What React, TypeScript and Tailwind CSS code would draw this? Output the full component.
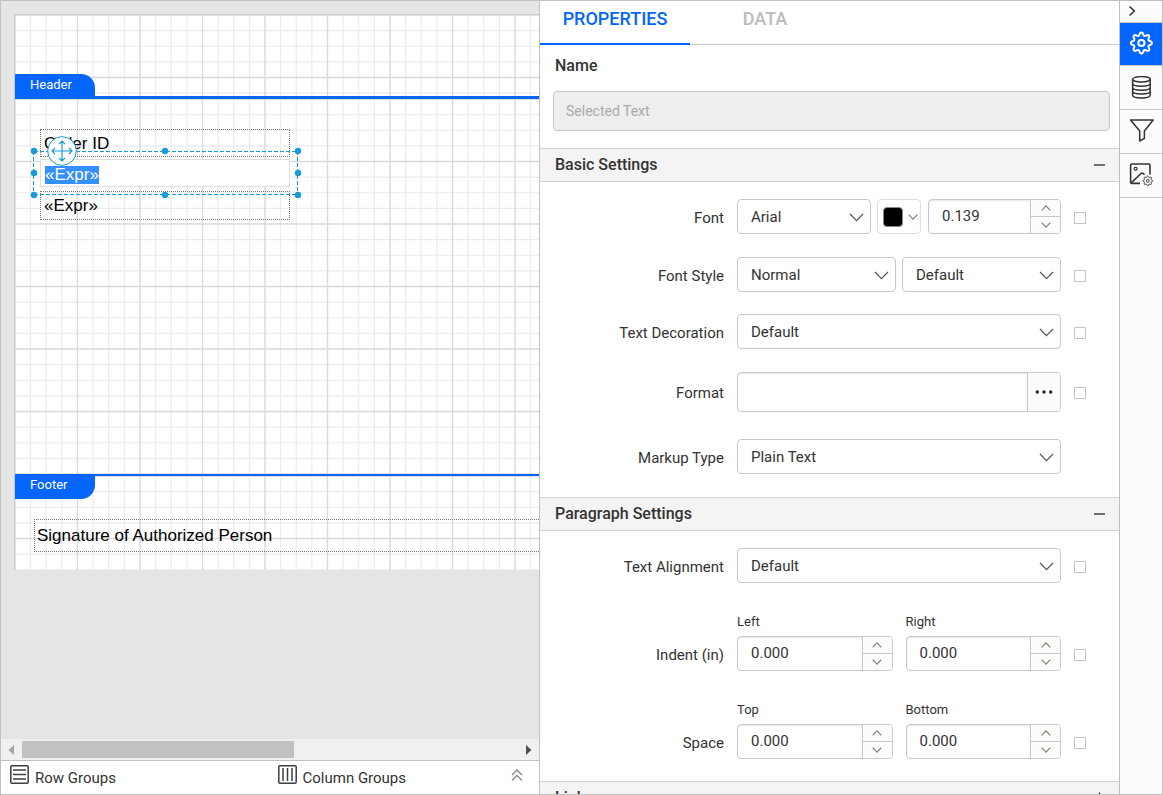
import { useId, type ReactNode } from "react";

function GridPaper() {
  const id = useId();
  const minor = [15.625, 31.25, 46.875, 78.125, 93.75, 109.375];
  const major = [0, 62.5, 125];
  const lines = (at: number[]) => at.map((p) => `M${p} 0V125M0 ${p}H125`).join("");
  return (
    <svg className="absolute inset-0 h-full w-full" aria-hidden="true">
      <defs>
        <pattern id={id} width="125" height="125" patternUnits="userSpaceOnUse">
          <path d={lines(minor)} stroke="#ececec" strokeWidth="1.2" />
          <path d={lines(major)} stroke="#d9d9d9" strokeWidth="1.4" />
        </pattern>
      </defs>
      <rect width="100%" height="100%" fill={`url(#${id})`} />
    </svg>
  );
}

/** Closed outline of an eight-lobed gear around (cx, cy). */
function gearPath(cx: number, cy: number, radius: number, lobe: number) {
  const points: string[] = [];
  for (let i = 0; i < 96; i++) {
    const a = (i * Math.PI) / 48;
    const wave = Math.cos(8 * a);
    const r = radius + lobe * Math.sign(wave) * Math.pow(Math.abs(wave), 0.7);
    points.push(`${(cx + r * Math.cos(a)).toFixed(2)} ${(cy + r * Math.sin(a)).toFixed(2)}`);
  }
  return `M${points.join("L")}Z`;
}

function GearIcon() {
  return (
    <svg width="26" height="26" viewBox="0 0 26 26" fill="none" stroke="#fff" strokeWidth="2" strokeLinejoin="round" aria-hidden="true">
      <path d={gearPath(13.4, 12, 9.1, 1.4)} />
      <circle cx="13.4" cy="12" r="3.1" />
    </svg>
  );
}

function DatabaseIcon() {
  return (
    <svg width="22" height="24" viewBox="0 0 22 24" fill="none" stroke="#333" strokeWidth="1.5" aria-hidden="true">
      <ellipse cx="11.4" cy="3.3" rx="8.8" ry="2.7" />
      <path d="M2.6 3.300V19C2.600 20.800 6 22 11.400 22S20.200 20.800 20.200 19V3.300M2.600 7.300C2.600 9.100 6 10.300 11.400 10.300S20.200 9.100 20.200 7.300M2.600 11.200C2.600 13 6 14.200 11.400 14.200S20.200 13 20.200 11.200M2.600 15.100C2.600 16.900 6 18.100 11.400 18.100S20.200 16.900 20.200 15.100" />
    </svg>
  );
}

function FunnelIcon() {
  return (
    <svg width="26" height="26" viewBox="0 0 26 26" fill="none" stroke="#333" strokeWidth="1.5" strokeLinejoin="round" aria-hidden="true">
      <path d="M2.6 1H25.2L16.4 12V19.400L11.700 22V12Z" />
    </svg>
  );
}

function ImageSettingsIcon() {
  return (
    <svg width="26" height="26" viewBox="0 0 26 26" fill="none" stroke="#333" aria-hidden="true">
      <path strokeWidth="1.600" d="M22 11.500V2.200A1.200 1.200 0 0 0 20.800 1H3.800A1.200 1.200 0 0 0 2.600 2.200V19.200A1.200 1.200 0 0 0 3.800 20.400H12" />
      <path strokeWidth="1.600" d="M3.500 19.600L13 10.500Q14 9.700 15 10.500L16.500 11.700" />
      <circle cx="7.600" cy="5.800" r="1.500" strokeWidth="1.200" />
      <path strokeWidth="1" d={gearPath(19.8, 17.8, 4.2, 0.7)} />
      <circle cx="19.800" cy="17.800" r="1.400" strokeWidth="1" />
    </svg>
  );
}

function Chevron({ up = false, small = false }: { up?: boolean; small?: boolean }) {
  return (
    <svg
      className={small ? "h-[6px] w-[10px]" : "h-[9px] w-[15px]"}
      viewBox="0 0 15 9"
      fill="none"
      stroke={small ? "#8f7b70" : "#555"}
      strokeWidth={small ? 1.8 : 1.2}
      aria-hidden="true"
    >
      <path d={up ? "M1 8L7.5 1.3L14 8" : "M1 1L7.5 7.7L14 1"} />
    </svg>
  );
}

function Select({ id, label, value, className = "flex-1" }: { id: string; label?: string; value: string; className?: string }) {
  return (
    <div className={`relative min-w-0 ${className}`}>
      <select
        id={id}
        aria-label={label}
        className="h-[35px] w-full appearance-none rounded border border-[#c8c8c8] bg-white pl-[13px] pr-6 pt-px text-[15px] text-[#333]"
      >
        <option>{value}</option>
      </select>
      <span className="pointer-events-none absolute inset-y-0 right-[7px] flex items-center pt-px">
        <Chevron />
      </span>
    </div>
  );
}

function Spinner({ id, value, label, className = "flex-1" }: { id: string; value: string; label?: string; className?: string }) {
  return (
    <div className={`flex h-[35px] min-w-0 overflow-hidden rounded border border-[#c8c8c8] bg-white ${className}`}>
      <input
        id={id}
        aria-label={label}
        defaultValue={value}
        className="min-w-0 flex-1 pl-[13px] text-[15px] text-[#333] shadow-[inset_0_1px_2px_#0000001a]"
      />
      <div className="flex w-[30px] shrink-0 flex-col divide-y divide-[#c8c8c8] border-l border-[#c8c8c8] bg-[#fcfcfc]">
        <button type="button" aria-label="Increase" className="flex flex-1 items-center justify-center">
          <Chevron up small />
        </button>
        <button type="button" aria-label="Decrease" className="flex flex-1 items-center justify-center">
          <Chevron small />
        </button>
      </div>
    </div>
  );
}

function Row({ label, htmlFor, className = "items-end mb-[23px]", check = true, children }: {
  label: string;
  htmlFor: string;
  className?: string;
  check?: boolean;
  children: ReactNode;
}) {
  return (
    <div className={`flex pr-[33px] ${className}`}>
      <div className="flex h-[35px] w-[184px] shrink-0 items-center justify-end pt-[3px]">
        <label htmlFor={htmlFor}>{label}</label>
      </div>
      <div className="ml-[13px] flex min-w-0 flex-1">{children}</div>
      <div className="ml-[13px] flex h-[35px] w-3 shrink-0 items-center pt-0.5">
        {check && (
          <input type="checkbox" aria-label={`${label} expression`} className="h-3 w-3 appearance-none border border-[#c4c4c4] bg-white" />
        )}
      </div>
    </div>
  );
}

function SectionHeader({ title, open = true }: { title: string; open?: boolean }) {
  return (
    <h2 className="h-[34px] shrink-0 border-y border-[#d0d0d0] bg-[#f4f4f4]">
      <button type="button" className="flex h-full w-full items-center justify-between pl-[15px] pr-[13px] text-[16px] font-medium">
        {title}
        <svg width="13" height="13" viewBox="0 0 13 13" stroke="#333" strokeWidth="1.4" aria-hidden="true">
          <path d={open ? "M1 6H12" : "M1 6H12M6.5 0.5V12"} />
        </svg>
      </button>
    </h2>
  );
}

function LabeledSpinner({ id, label }: { id: string; label: string }) {
  return (
    <div className="flex min-w-0 flex-1 flex-col">
      <label htmlFor={id} className="mb-[5px] text-[13px] leading-[18px]">
        {label}
      </label>
      <Spinner id={id} value="0.000" className="w-full" />
    </div>
  );
}

function Selection() {
  const handles: [number, number][] = [
    [5, 4], [136, 4], [269, 4], [5, 26], [269, 26], [5, 48], [136, 48], [269, 48],
  ];
  return (
    <svg className="absolute left-[14px] top-[48px]" width="274" height="56" viewBox="0 0 274 56" fill="none" aria-hidden="true">
      <path d="M5 4.5H269M5 47.5H269M4.5 4V48M268.5 4V48" stroke="#1b9ad6" strokeDasharray="4 2" />
      {handles.map(([x, y]) => (
        <circle key={`${x}-${y}`} cx={x} cy={y} r="3.2" fill="#1b9ad6" />
      ))}
    </svg>
  );
}

function MoveHandle() {
  return (
    <svg className="absolute left-[32px] top-[37px]" width="30" height="30" viewBox="0 0 30 30" fill="none" stroke="#1b9ad6" aria-hidden="true">
      <circle cx="15" cy="15" r="14.3" fill="#fff" />
      <path strokeWidth="1.2" d="M15 5V25M5 15H25M12 8L15 5L18 8M12 22L15 25L18 22M8 12L5 15L8 18M22 12L25 15L22 18" />
    </svg>
  );
}

function Designer() {
  return (
    <main className="flex w-[539px] min-w-0 shrink-0 flex-col border-r border-[#c0c0c0] bg-[#e5e5e5]">
      <div className="min-h-0 flex-1 overflow-hidden pl-[13px] pt-[13px]">
        <div className="border-l border-t border-[#c8c8c8] bg-white font-['Liberation_Sans',Arial,sans-serif] text-[17px] text-black">
          <section className="relative flex h-[84px] items-end border-b-[3px] border-[#0565ff]">
            <GridPaper />
            <div className="relative h-[22px] w-20 rounded-tr-[14px] bg-[#0565ff] pl-[15px] font-[Roboto,sans-serif] text-[13px] leading-[22px] text-white">
              Header
            </div>
          </section>
          <section className="relative h-[375px]">
            <GridPaper />
            <div className="absolute left-[25px] top-[30px] h-[28px] w-[250px] border border-dotted border-[#777] pl-[3px] leading-[27px]">
              Order ID
            </div>
            <div className="absolute left-[25px] top-[92px] h-[29px] w-[250px] border border-dotted border-[#777] pl-[3px] leading-[27px]">
              «Expr»
            </div>
            <div className="absolute left-[25px] top-[60px] flex h-[28px] w-[250px] items-center border border-[#ddd] bg-white pl-1 pt-[3px]">
              <span className="bg-[#3390ff] leading-[18px] text-white">«Expr»</span>
            </div>
            <Selection />
            <MoveHandle />
          </section>
          <section className="relative h-[96px] border-t-2 border-[#0565ff]">
            <GridPaper />
            <div className="relative h-[23px] w-20 rounded-br-[14px] bg-[#0565ff] pl-[15px] font-[Roboto,sans-serif] text-[13px] leading-[18px] text-white">
              Footer
            </div>
            <div className="absolute left-[19px] right-0 top-[43px] h-[33px] border border-r-0 border-dotted border-[#777] pl-[2px] leading-[31px]">
              Signature of Authorized Person
            </div>
          </section>
        </div>
      </div>
      <div className="flex h-[21px] items-center bg-[#f0f0f0] px-[7px]">
        <svg width="6" height="10" viewBox="0 0 6 10" fill="#a3a3a3" aria-hidden="true">
          <path d="M6 0V10L0.5 5Z" />
        </svg>
        <div className="ml-2 flex-1">
          <div className="h-[17px] w-[54%] bg-[#c1c1c1]" />
        </div>
        <svg width="6" height="10" viewBox="0 0 6 10" fill="#505050" aria-hidden="true">
          <path d="M0 0V10L5.5 5Z" />
        </svg>
      </div>
      <footer className="flex h-[34px] border-t border-[#c0c0c0] bg-white text-[15px]">
        <div className="flex flex-1 gap-[6px] pl-[9px] pt-1">
          <svg width="19" height="19" viewBox="0 0 19 19" fill="none" stroke="#3b3f46" strokeWidth="1.5" aria-hidden="true">
            <rect x="0.8" y="0.8" width="17.4" height="17.4" rx="1" />
            <path d="M3 5H16M3 9.5H16M3 14H16" />
          </svg>
          <span className="pt-[2px]">Row Groups</span>
        </div>
        <div className="flex flex-1 gap-[6px] pl-[6px] pt-1">
          <svg width="19" height="19" viewBox="0 0 19 19" fill="none" stroke="#3b3f46" strokeWidth="1.5" aria-hidden="true">
            <rect x="0.8" y="0.8" width="17.4" height="17.4" rx="1" />
            <path d="M5 3V16M9.5 3V16M14 3V16" />
          </svg>
          <span className="flex-1 pt-[2px]">Column Groups</span>
          <button type="button" aria-label="Expand groups" className="mr-4 h-5 w-3">
            <svg width="12" height="12" viewBox="0 0 12 12" fill="none" stroke="#888" strokeWidth="1.3" aria-hidden="true">
              <path d="M1 6L6 1L11 6M1 11.5L6 6.5L11 11.5" />
            </svg>
          </button>
        </div>
      </footer>
    </main>
  );
}

function Properties() {
  return (
    <section className="flex min-w-0 flex-1 flex-col overflow-hidden bg-white">
      <div role="tablist" className="flex h-11 shrink-0 border-b border-[#c8c8c8] text-[18px] font-medium">
        <button type="button" role="tab" aria-selected="true" className="-mb-px w-[150px] border-b-2 border-[#0565ff] pb-2 text-[#0565ff]">
          PROPERTIES
        </button>
        <button type="button" role="tab" aria-selected="false" className="w-[150px] pb-2 text-[#bbb]">
          DATA
        </button>
      </div>
      <div className="flex shrink-0 flex-col px-[9px] pb-[17px] pl-[13px] pt-[11px]">
        <label htmlFor="name" className="mb-[15px] pl-[2px] text-[16px] font-medium leading-5">
          Name
        </label>
        <input
          id="name"
          disabled
          placeholder="Selected Text"
          className="h-10 w-full rounded border border-[#c8c8c8] bg-[#eee] px-3 text-[14px] placeholder:text-[#aaa]"
        />
      </div>
      <SectionHeader title="Basic Settings" />
      <div className="shrink-0 pt-[17px] text-[15px]">
        <Row label="Font" htmlFor="font">
          <Select id="font" value="Arial" className="w-[134px]" />
          <button type="button" aria-label="Font color" className="ml-[6px] flex w-11 items-center justify-between rounded border border-[#ddd] pl-[5px] pr-[2px]">
            <span className="h-5 w-5 rounded-sm border border-[#888] bg-black" />
            <Chevron small />
          </button>
          <Spinner id="font-size" label="Font size" value="0.139" className="ml-[7px] flex-1" />
        </Row>
        <Row label="Font Style" htmlFor="font-style" className="items-end mb-[22px]">
          <div className="flex flex-1 gap-[6px]">
            <Select id="font-style" value="Normal" />
            <Select id="font-weight" label="Font weight" value="Default" />
          </div>
        </Row>
        <Row label="Text Decoration" htmlFor="decoration">
          <Select id="decoration" value="Default" />
        </Row>
        <Row label="Format" htmlFor="format" className="items-center mb-[27px]">
          <div className="flex h-10 flex-1 overflow-hidden rounded border border-[#c8c8c8]">
            <input id="format" className="min-w-0 flex-1 px-[13px] shadow-[inset_0_1px_2px_#0000001a]" />
            <button type="button" aria-label="Edit format" className="flex w-[33px] items-center justify-center border-l border-[#c8c8c8] bg-[#fcfcfc]">
              <svg width="18" height="4" viewBox="0 0 18 4" fill="#222" aria-hidden="true">
                <circle cx="2.3" cy="2" r="1.7" />
                <circle cx="9" cy="2" r="1.7" />
                <circle cx="15.7" cy="2" r="1.7" />
              </svg>
            </button>
          </div>
        </Row>
        <Row label="Markup Type" htmlFor="markup" check={false}>
          <Select id="markup" value="Plain Text" />
        </Row>
      </div>
      <SectionHeader title="Paragraph Settings" />
      <div className="shrink-0 pt-[17px] text-[15px]">
        <Row label="Text Alignment" htmlFor="alignment" className="items-end mb-[30px]">
          <Select id="alignment" value="Default" />
        </Row>
        <Row label="Indent (in)" htmlFor="indent-left" className="items-end mb-[30px]">
          <div className="flex min-w-0 flex-1 gap-[13px]">
            <LabeledSpinner id="indent-left" label="Left" />
            <LabeledSpinner id="indent-right" label="Right" />
          </div>
        </Row>
        <Row label="Space" htmlFor="space-top" className="items-end mb-[22px]">
          <div className="flex min-w-0 flex-1 gap-[13px]">
            <LabeledSpinner id="space-top" label="Top" />
            <LabeledSpinner id="space-bottom" label="Bottom" />
          </div>
        </Row>
      </div>
      <SectionHeader title="Link" open={false} />
    </section>
  );
}

function SideRail() {
  const cell = "flex h-11 items-center justify-center border-b border-[#c8c8c8]";
  return (
    <nav aria-label="Panels" className="flex w-[43px] shrink-0 flex-col border-l border-[#c0c0c0] bg-[#fcfcfc]">
      <button type="button" aria-label="Collapse panel" className="flex h-[22px] items-center border-b border-[#c8c8c8] pb-px pl-[8px]">
        <svg width="8" height="12" viewBox="0 0 8 12" fill="none" stroke="#333" strokeWidth="1.6" aria-hidden="true">
          <path d="M1.5 1.5L6.3 6L1.5 10.5" />
        </svg>
      </button>
      <button type="button" aria-label="Properties" className="flex h-[43px] items-center justify-center border-b border-[#c8c8c8] bg-[#0565ff]">
        <GearIcon />
      </button>
      <button type="button" aria-label="Data" className={cell}>
        <DatabaseIcon />
      </button>
      <button type="button" aria-label="Filters" className={cell}>
        <FunnelIcon />
      </button>
      <button type="button" aria-label="Image settings" className={cell}>
        <ImageSettingsIcon />
      </button>
    </nav>
  );
}

export default function App() {
  return (
    <div className="flex h-screen overflow-hidden border border-[#c0c0c0] font-[Roboto,sans-serif] text-[#333]">
      <Designer />
      <Properties />
      <SideRail />
    </div>
  );
}
